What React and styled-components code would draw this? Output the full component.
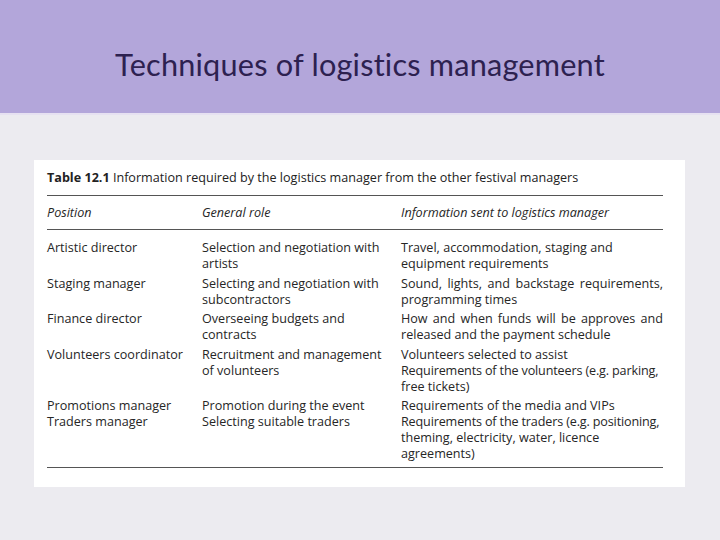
import styled, { createGlobalStyle } from 'styled-components'

const GlobalStyle = createGlobalStyle`
  html, body {
    margin: 0;
    padding: 0;
  }
  body {
    width: 720px;
    height: 540px;
    overflow: hidden;
    background: #ecebf0;
  }
`

const Slide = styled.div`
  width: 720px;
  height: 540px;
  display: flex;
  flex-direction: column;
  background: #ecebf0;
`

const Header = styled.div`
  height: 115px;
  background: #b3a6da;
  border-bottom: 2px solid #e6e1f1;
  display: flex;
  justify-content: center;
  box-sizing: border-box;
`

const Title = styled.h1`
  margin: 45px 0 0 0;
  font-family: Lato, 'Open Sans', sans-serif;
  font-weight: 400;
  font-size: 30.7px;
  line-height: 40px;
  color: #2d2150;
  letter-spacing: 0.2px;
`

const Body = styled.div`
  flex: 1;
  padding: 45px 35px 0 34px;
`

const Card = styled.div`
  background: #ffffff;
  width: 651px;
  height: 327px;
  box-sizing: border-box;
  padding: 9px 22px 0 13px;
`

const Caption = styled.div`
  font-family: 'Open Sans', 'Noto Sans', sans-serif;
  font-size: 12.6px;
  line-height: 18px;
  color: #222;
  padding-bottom: 8px;
  border-bottom: 1.5px solid #555;
  b {
    font-weight: 700;
  }
`

const Table = styled.div`
  display: grid;
  grid-template-columns: 155px 199px 1fr;
  font-family: 'Open Sans', 'Noto Sans', sans-serif;
  font-size: 12.6px;
  line-height: 16px;
  color: #262626;
  border-bottom: 1.5px solid #555;
`

const HeadCell = styled.div`
  font-style: italic;
  padding: 9px 0 8px;
  border-bottom: 1.5px solid #555;
  margin-bottom: 10px;
`

const Cell = styled.div`
  padding-bottom: ${(p) => p.$gap || 3.5}px;
  min-width: 0;
`

const Line = styled.div`
  white-space: nowrap;
  letter-spacing: ${(p) => (p.$tight ? '-0.15px' : '0')};
  ${(p) =>
    p.$justify &&
    `
    white-space: normal;
    text-align: justify;
    text-align-last: justify;
  `}
`

// each entry is one printed line: [text, justify?, tight?]
const rows = [
  {
    pos: ['Artistic director'],
    role: ['Selection and negotiation with', 'artists'],
    info: ['Travel, accommodation, staging and', 'equipment requirements'],
  },
  {
    pos: ['Staging manager'],
    role: ['Selecting and negotiation with', 'subcontractors'],
    info: [['Sound, lights, and backstage requirements,', true], 'programming times'],
  },
  {
    pos: ['Finance director'],
    role: ['Overseeing budgets and', 'contracts'],
    info: [['How and when funds will be approves and', true], 'released and the payment schedule'],
  },
  {
    pos: ['Volunteers coordinator'],
    role: ['Recruitment and management', 'of volunteers'],
    info: [
      'Volunteers selected to assist',
      ['Requirements of the volunteers (e.g. parking,', false, true],
      'free tickets)',
    ],
  },
  {
    pos: ['Promotions manager', 'Traders manager'],
    role: ['Promotion during the event', 'Selecting suitable traders'],
    info: [
      'Requirements of the media and VIPs',
      ['Requirements of the traders (e.g. positioning,', false, true],
      'theming, electricity, water, licence',
      'agreements)',
    ],
    gap: 5,
  },
]

function Lines({ items }) {
  return items.map((it) => {
    const [text, justify, tight] = Array.isArray(it) ? it : [it]
    return (
      <Line key={text} $justify={justify} $tight={tight}>
        {text}
      </Line>
    )
  })
}

function Row({ row }) {
  return (
    <>
      <Cell $gap={row.gap}>
        <Lines items={row.pos} />
      </Cell>
      <Cell $gap={row.gap}>
        <Lines items={row.role} />
      </Cell>
      <Cell $gap={row.gap}>
        <Lines items={row.info} />
      </Cell>
    </>
  )
}

export default function App() {
  return (
    <>
      <GlobalStyle />
      <Slide>
        <Header>
          <Title>Techniques of logistics management</Title>
        </Header>
        <Body>
          <Card>
            <Caption>
              <b>Table 12.1</b> Information required by the logistics manager from the other festival managers
            </Caption>
            <Table>
              <HeadCell>Position</HeadCell>
              <HeadCell>General role</HeadCell>
              <HeadCell>Information sent to logistics manager</HeadCell>
              {rows.map((r) => (
                <Row key={r.pos[0]} row={r} />
              ))}
            </Table>
          </Card>
        </Body>
      </Slide>
    </>
  )
}
